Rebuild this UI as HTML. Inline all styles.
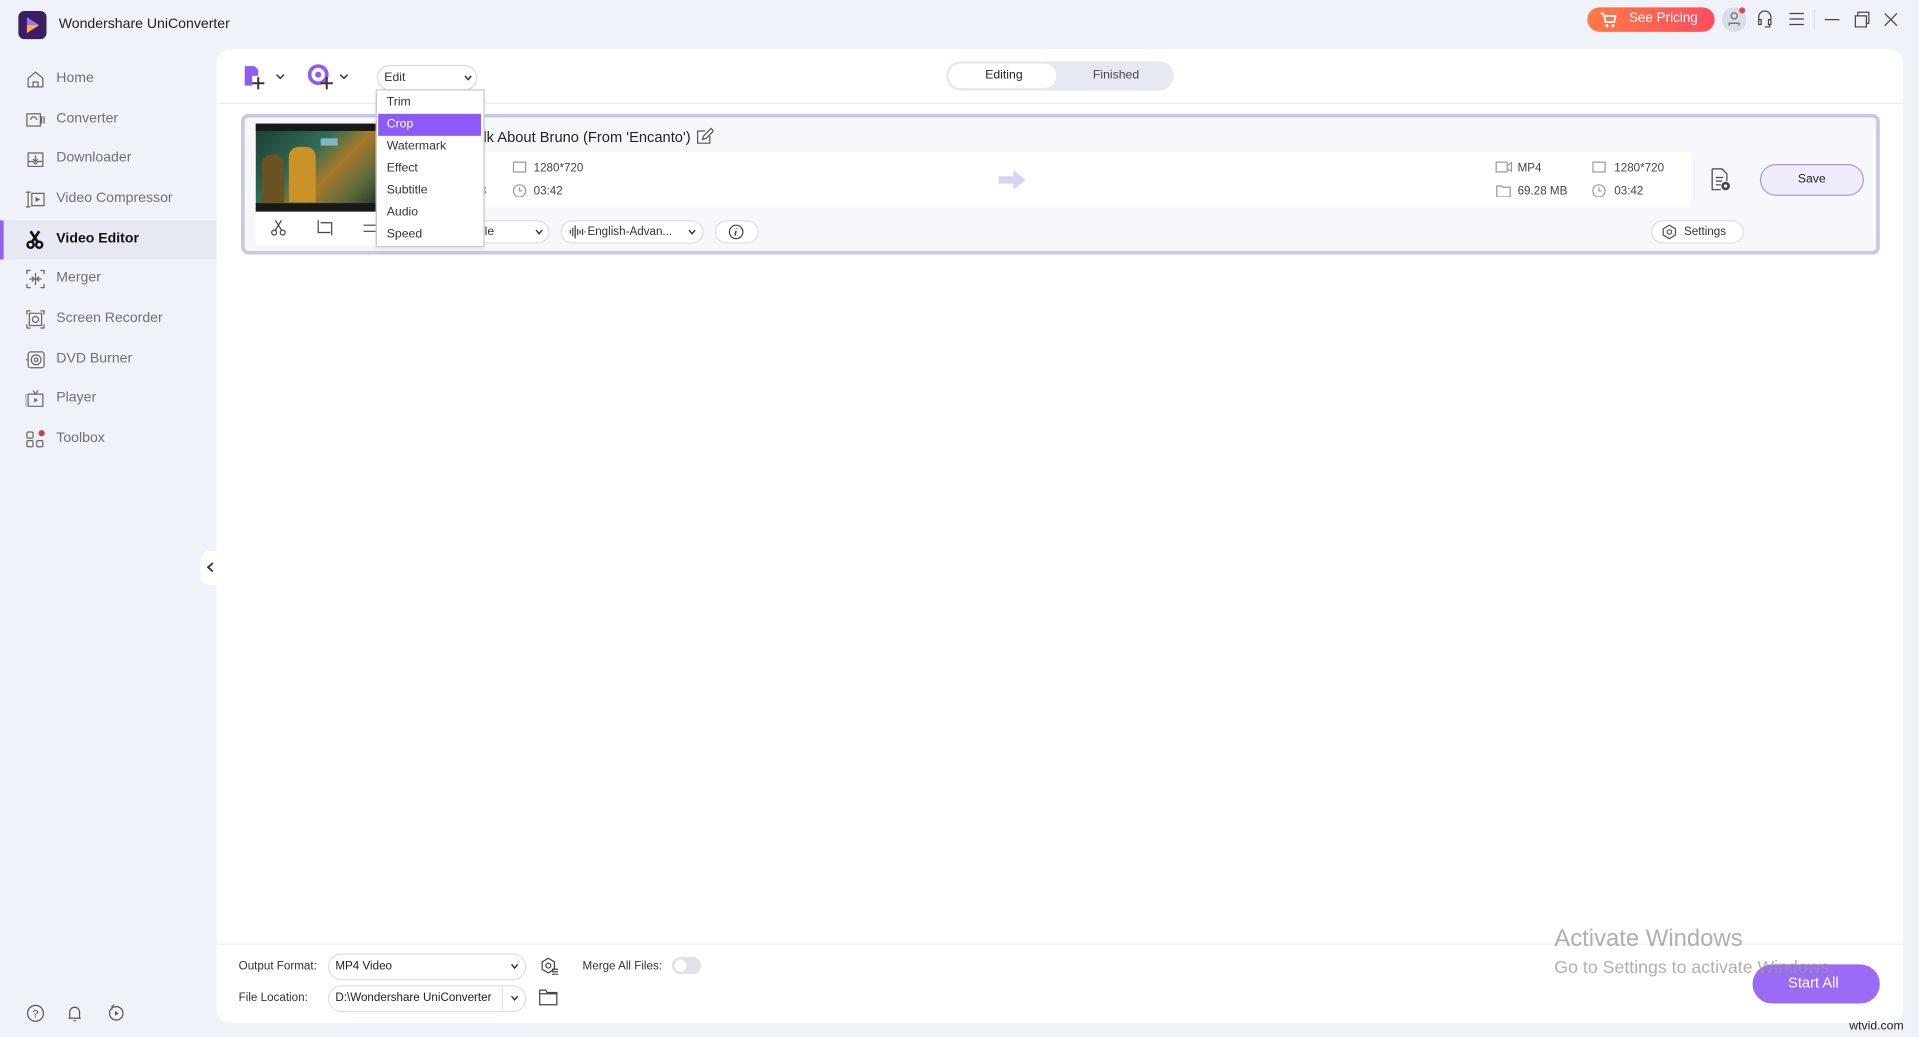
<!DOCTYPE html>
<html><head><meta charset="utf-8">
<style>
*{margin:0;padding:0;box-sizing:border-box}
html,body{width:1919px;height:1037px;overflow:hidden;background:#eff2f9;font-family:"Liberation Sans",sans-serif}
#w{position:absolute;left:0;top:0;width:1568px;height:847px;transform:scale(1.22385);transform-origin:0 0;background:#eff2f9}
.a{position:absolute}
.t{position:absolute;white-space:nowrap}
.nav{position:absolute;left:0;width:177px;height:32px;font-size:11.5px;color:#6f6f78}
.nav span{position:absolute;left:46px;top:9px}
.nav svg{position:absolute;left:21px;top:8px}
.mi{position:absolute;left:9px;font-size:10px;color:#333;width:84px;height:18px;line-height:18px;padding-left:7px}
.sm{font-size:10px;color:#333}
.pill{position:absolute;border:1px solid #dcdfe8;border-radius:12px;background:#fff}
</style></head><body><div id="w">
<!-- title bar -->
<div class="a" style="left:15px;top:9px;width:23px;height:23px;border-radius:5px;background:#3b1f63"></div>
<svg class="a" style="left:19px;top:12px" width="16" height="17"><path d="M3 2 L13 8.5 L3 15 Z" fill="#a66bff"/><path d="M3 8.5 L13 8.5 L3 15Z" fill="#ffb13b"/></svg>
<div class="t" style="left:48px;top:14px;font-size:11.5px;color:#222">Wondershare UniConverter</div>
<div class="a" style="left:1297px;top:6px;width:104px;height:20px;border-radius:10px;background:linear-gradient(90deg,#ff7a45,#ff4d5e)"></div>
<svg class="a" style="left:1307px;top:9px" width="14" height="14"><path d="M1 2h2l2 7h7l1-5H4" stroke="#fff" stroke-width="1.5" fill="none"/><circle cx="6" cy="12" r="1.2" fill="#fff"/><circle cx="11" cy="12" r="1.2" fill="#fff"/></svg>
<div class="t" style="left:1331px;top:9px;font-size:11px;color:#fff">See Pricing</div>
<div class="a" style="left:1407px;top:6px;width:20px;height:20px;border-radius:10px;background:#d9dde9"></div>
<div class="a" style="left:1421px;top:6px;width:5px;height:5px;border-radius:3px;background:#e5484d"></div>
<svg class="a" style="left:1411px;top:9px" width="12" height="13"><circle cx="6" cy="4" r="2.5" stroke="#666" fill="none"/><path d="M2 12v-2h8v2" stroke="#666" fill="none"/></svg>
<svg class="a" style="left:1434px;top:7px" width="16" height="18"><path d="M3 10V7a5 5 0 0110 0v3M3 9h2v4H3zM11 9h2v4h-2zM12 13v2H8" stroke="#444" fill="none"/></svg>
<svg class="a" style="left:1462px;top:10px" width="12" height="11"><path d="M0 1h12M0 5.5h12M0 10h12" stroke="#444"/></svg>
<div class="a" style="left:1482px;top:8px;width:1px;height:16px;background:#dde"></div>
<svg class="a" style="left:1491px;top:9px" width="60" height="14"><path d="M0 7h12" stroke="#444"/><path d="M25 4h9v9h-9zM27 4V1h9v9h-2" stroke="#444" fill="none"/><path d="M49 2l10 10M59 2L49 12" stroke="#444"/></svg>

<!-- sidebar -->
<div class="a" style="left:0;top:180px;width:177px;height:32px;background:#e6e9f2"></div>
<div class="a" style="left:0;top:180px;width:3px;height:32px;background:#8f63f0"></div>
<div class="nav" style="top:49px"><svg width="16" height="16"><path d="M2 7L8 2l6 5v7H2zM6 14v-4h4v4" stroke="#666" fill="none"/></svg><span>Home</span></div>
<div class="nav" style="top:82px"><svg width="16" height="16"><rect x="1" y="3" width="11" height="10" stroke="#666" fill="none"/><path d="M13 5v6M15 5v6M4 8a2.5 2.5 0 015 0" stroke="#666" fill="none"/></svg><span>Converter</span></div>
<div class="nav" style="top:114px"><svg width="16" height="16"><path d="M2 3h12v11H2zM2 10h4l2 2 2-2h4M8 5v5M6 8l2 2 2-2" stroke="#666" fill="none"/></svg><span>Downloader</span></div>
<div class="nav" style="top:147px"><svg width="16" height="16"><path d="M2 2v12M0 2h4M0 14h4M5 3h10v10H5z" stroke="#666" fill="none"/><path d="M8 6l4 2-4 2z" fill="#666"/></svg><span>Video Compressor</span></div>
<div class="nav" style="top:180px;color:#111;font-weight:bold"><svg width="16" height="16"><circle cx="4" cy="12" r="2.5" stroke="#111" stroke-width="2" fill="none"/><circle cx="11" cy="12" r="2.5" stroke="#111" stroke-width="2" fill="none"/><path d="M4 1l6 9M11 1L5 10" stroke="#111" stroke-width="2.2"/></svg><span>Video Editor</span></div>
<div class="nav" style="top:212px"><svg width="16" height="16"><path d="M1 4V1h3M12 1h3v3M15 12v3h-3M4 15H1v-3M3 8h4M5 6l2 2-2 2M13 8H9M11 6l-2 2 2 2M8 3v10" stroke="#666" fill="none"/></svg><span>Merger</span></div>
<div class="nav" style="top:245px"><svg width="16" height="16"><path d="M1 4V1h3M12 1h3v3M15 12v3h-3M4 15H1v-3M3 3h10v10H3z" stroke="#666" fill="none"/><circle cx="8" cy="8" r="2.5" stroke="#666" fill="none"/></svg><span>Screen Recorder</span></div>
<div class="nav" style="top:278px"><svg width="16" height="16"><rect x="2" y="1.5" width="13" height="13" rx="2" stroke="#666" fill="none"/><circle cx="8.5" cy="8" r="4" stroke="#666" fill="none"/><circle cx="8.5" cy="8" r="1.5" stroke="#666" fill="none"/><path d="M0 8h2" stroke="#666"/></svg><span>DVD Burner</span></div>
<div class="nav" style="top:310px"><svg width="16" height="16"><path d="M2 4h12v10H2zM0 4v10M6 1l2 3 2-3" stroke="#666" fill="none"/><path d="M7 7l3 2-3 2z" fill="#666"/></svg><span>Player</span></div>
<div class="nav" style="top:343px"><svg width="16" height="16"><rect x="1" y="2" width="5" height="5" rx="1" stroke="#666" fill="none"/><rect x="1" y="9" width="5" height="5" rx="1" stroke="#666" fill="none"/><rect x="9" y="9" width="5" height="5" rx="1" stroke="#666" fill="none"/><circle cx="13" cy="3" r="2.5" fill="#d03a45"/></svg><span>Toolbox</span></div>
<svg class="a" style="left:20px;top:819px" width="90" height="18"><circle cx="9" cy="9" r="6.5" stroke="#555" fill="none"/><text x="6.5" y="12.5" font-size="9" fill="#555" font-family="Liberation Sans">?</text><path d="M37 13V8a4 4 0 018 0v5zM36 13h10M40 15h2" stroke="#555" fill="none"/><circle cx="75" cy="9" r="5.5" stroke="#555" fill="none"/><path d="M74 7l3 2-3 2z" fill="#555"/><path d="M71 4l2-2" stroke="#555"/></svg>

<!-- collapse handle -->
<div class="a" style="left:164px;top:450px;width:13px;height:28px;background:#fff;border-radius:8px 0 0 8px"></div>
<svg class="a" style="left:169px;top:459px" width="6" height="9"><path d="M5 1L1 4.5 5 8" stroke="#333" stroke-width="1.5" fill="none"/></svg>

<!-- main panel -->
<div class="a" style="left:177px;top:40px;width:1378px;height:796px;background:#fff;border-radius:12px"></div>
<div class="a" style="left:177px;top:84px;width:1378px;height:1px;background:#eceef3"></div>
<div class="a" style="left:177px;top:771px;width:1378px;height:1px;background:#eceef3"></div>

<!-- toolbar -->
<svg class="a" style="left:199px;top:52px" width="36" height="22"><path d="M1 2h8l3 3v5H7v8H1z" fill="#8e5df5"/><path d="M12 11v10M7 16h10" stroke="#333" stroke-width="1.6"/><path d="M27 9l3 3 3-3" stroke="#333" stroke-width="1.2" fill="none"/></svg>
<svg class="a" style="left:251px;top:52px" width="36" height="22"><circle cx="9" cy="9" r="7" stroke="#8e5df5" stroke-width="3" fill="none"/><circle cx="9" cy="9" r="2.5" fill="#8e5df5"/><path d="M16 11v10M11 16h10" stroke="#333" stroke-width="1.6"/><path d="M27 9l3 3 3-3" stroke="#333" stroke-width="1.2" fill="none"/></svg>
<div class="pill" style="left:308px;top:53px;width:82px;height:21px;border-color:#d6d9e2"></div>
<div class="t sm" style="left:314px;top:58px">Edit</div>
<svg class="a" style="left:379px;top:61px" width="7" height="5"><path d="M1 1l2.5 3L6 1" stroke="#333" stroke-width="1.2" fill="none"/></svg>

<!-- tabs -->
<div class="a" style="left:773px;top:50px;width:186px;height:24px;border-radius:12px;background:#e6e9f1"></div>
<div class="a" style="left:775px;top:52px;width:88px;height:20px;border-radius:10px;background:#fff"></div>
<div class="t sm" style="left:805px;top:56px;color:#222">Editing</div>
<div class="t sm" style="left:893px;top:56px;color:#444">Finished</div>

<!-- card -->
<div class="a" style="left:197px;top:93px;width:1339px;height:115px;border:3px solid #c9c7e8;border-radius:6px;background:#f7f8fb"></div>
<div class="a" style="left:370px;top:124px;width:1012px;height:45px;background:#fff"></div>
<div class="a" style="left:209px;top:101px;width:98px;height:72px;background:linear-gradient(135deg,#1d3a33 0%,#2f6b55 40%,#a67a2a 60%,#5a6a3a 80%,#1c2c24 100%)"></div>
<div class="a" style="left:209px;top:101px;width:98px;height:6px;background:#181818"></div>
<div class="a" style="left:209px;top:166px;width:98px;height:7px;background:#181818"></div>
<div class="a" style="left:236px;top:120px;width:22px;height:45px;background:#c9932a;border-radius:8px 8px 0 0"></div>
<div class="a" style="left:214px;top:126px;width:18px;height:40px;background:#6b5222;border-radius:8px 8px 0 0"></div>
<div class="a" style="left:262px;top:113px;width:14px;height:6px;background:#7ab6c4"></div>
<div class="a" style="left:209px;top:173px;width:98px;height:27px;background:#fff"></div>
<svg class="a" style="left:220px;top:179px" width="90" height="14"><circle cx="4" cy="11" r="2" stroke="#444" fill="none"/><circle cx="11" cy="11" r="2" stroke="#444" fill="none"/><path d="M5 9L10 1M10 9L5 1" stroke="#444"/><path d="M40 1v10h10M42 3h9v10" stroke="#444" fill="none"/><path d="M77 5h12M77 10h12" stroke="#444"/></svg>
<div class="t" style="left:395px;top:105px;font-size:12px;color:#222">lk About Bruno (From 'Encanto')</div>
<svg class="a" style="left:569px;top:104px" width="14" height="14"><path d="M1 3h6M1 3v10h10V7M5 10l1-3 6-6 2 2-6 6z" stroke="#555" fill="none"/></svg>
<svg class="a" style="left:419px;top:131px" width="12" height="30"><rect x="0.5" y="1.5" width="10" height="8" stroke="#999" fill="none"/><circle cx="5.5" cy="25" r="5" stroke="#999" fill="none"/><path d="M5.5 22v3h2" stroke="#999" fill="none"/></svg>
<div class="t" style="left:436px;top:132px;font-size:9.5px;color:#444">1280*720</div>
<div class="t" style="left:436px;top:151px;font-size:9.5px;color:#444">03:42</div>
<div class="t" style="left:392px;top:151px;font-size:10px;color:#888">3</div>
<svg class="a" style="left:816px;top:138px" width="24" height="18"><path d="M0 6h12V1l10 8-10 8v-5H0z" fill="#d9d2f5"/></svg>
<svg class="a" style="left:1222px;top:131px" width="14" height="30"><rect x="0.5" y="1.5" width="9" height="8" stroke="#999" fill="none"/><path d="M10 4l3-2v7l-3-2" stroke="#999" fill="none"/><path d="M1 21h4l1 1h6v8H1z" stroke="#999" fill="none"/></svg>
<div class="t" style="left:1240px;top:132px;font-size:9.5px;color:#444">MP4</div>
<div class="t" style="left:1240px;top:151px;font-size:9.5px;color:#444">69.28 MB</div>
<svg class="a" style="left:1301px;top:131px" width="12" height="30"><rect x="0.5" y="1.5" width="10" height="8" stroke="#999" fill="none"/><circle cx="5.5" cy="25" r="5" stroke="#999" fill="none"/><path d="M5.5 22v3h2" stroke="#999" fill="none"/></svg>
<div class="t" style="left:1319px;top:132px;font-size:9.5px;color:#444">1280*720</div>
<div class="t" style="left:1319px;top:151px;font-size:9.5px;color:#444">03:42</div>
<div class="a" style="left:1384px;top:131px;width:1px;height:32px;background:#eee"></div>
<svg class="a" style="left:1396px;top:137px" width="20" height="22"><path d="M3 1h8l4 4v6M3 1v17h7M6 8h6M6 11h5M6 14h4" stroke="#444" fill="none"/><circle cx="14" cy="15" r="3.5" fill="#444"/><circle cx="14" cy="15" r="1.3" fill="#fff"/></svg>
<div class="a" style="left:1438px;top:134px;width:85px;height:26px;border:1px solid #a99ed6;border-radius:13px;background:#f1ecfc"></div>
<div class="t" style="left:1469px;top:141px;font-size:10px;color:#222">Save</div>
<div class="pill" style="left:1349px;top:180px;width:76px;height:19px"></div>
<svg class="a" style="left:1358px;top:183px" width="12" height="13"><path d="M6 1l5 3v5l-5 3-5-3V4z" stroke="#555" fill="none"/><circle cx="6" cy="6.5" r="1.8" stroke="#555" fill="none"/></svg>
<div class="t" style="left:1376px;top:184px;font-size:9.5px;color:#333">Settings</div>
<div class="pill" style="left:380px;top:180px;width:69px;height:19px"></div>
<div class="t" style="left:396px;top:184px;font-size:10px;color:#333">le</div>
<svg class="a" style="left:437px;top:187px" width="7" height="5"><path d="M1 1l2.5 3L6 1" stroke="#333" stroke-width="1.2" fill="none"/></svg>
<div class="pill" style="left:458px;top:180px;width:117px;height:19px"></div>
<svg class="a" style="left:465px;top:184px" width="14" height="11"><path d="M1 4v3M3 2v7M5 0v11M7 3v5M9 4v3M11 3v5M13 5v1" stroke="#444"/></svg>
<div class="t" style="left:480px;top:184px;font-size:9.5px;color:#333">English-Advan...</div>
<svg class="a" style="left:562px;top:187px" width="7" height="5"><path d="M1 1l2.5 3L6 1" stroke="#333" stroke-width="1.2" fill="none"/></svg>
<div class="pill" style="left:584px;top:180px;width:36px;height:19px"></div>
<svg class="a" style="left:595px;top:183px" width="13" height="13"><circle cx="6.5" cy="6.5" r="5.5" stroke="#444" fill="none"/><path d="M6.5 5.5l-1 4M6.7 3.5v.5" stroke="#444" stroke-width="1.2"/></svg>

<!-- dropdown menu -->
<div class="a" style="left:307px;top:73px;width:89px;height:129px;background:#fff;border:1px solid #c8c8c8;box-shadow:0 1px 3px rgba(0,0,0,.1)"></div>
<div class="mi" style="top:75px;left:309px">Trim</div>
<div class="mi" style="top:93px;left:309px;background:#8c5af7;color:#fff">Crop</div>
<div class="mi" style="top:111px;left:309px">Watermark</div>
<div class="mi" style="top:129px;left:309px">Effect</div>
<div class="mi" style="top:147px;left:309px">Subtitle</div>
<div class="mi" style="top:165px;left:309px">Audio</div>
<div class="mi" style="top:183px;left:309px">Speed</div>

<!-- bottom bar -->
<div class="t" style="left:195px;top:784px;font-size:9.5px;color:#333">Output Format:</div>
<div class="pill" style="left:268px;top:779px;width:162px;height:22px"></div>
<div class="t" style="left:274px;top:784px;font-size:9.5px;color:#222">MP4 Video</div>
<svg class="a" style="left:417px;top:787px" width="7" height="5"><path d="M1 1l2.5 3L6 1" stroke="#333" stroke-width="1.2" fill="none"/></svg>
<svg class="a" style="left:441px;top:782px" width="16" height="16"><path d="M7 1l5 3v6l-5 3-5-3V4z" stroke="#444" fill="none"/><circle cx="7" cy="7" r="2" stroke="#444" fill="none"/><path d="M10 10h5M10 12h5M10 14h5" stroke="#444"/></svg>
<div class="t" style="left:476px;top:784px;font-size:9.5px;color:#333">Merge All Files:</div>
<div class="a" style="left:549px;top:782px;width:24px;height:14px;border-radius:7px;background:#dfe2ea"></div>
<div class="a" style="left:551px;top:784px;width:10px;height:10px;border-radius:5px;background:#fff"></div>
<div class="t" style="left:195px;top:810px;font-size:9.5px;color:#333">File Location:</div>
<div class="pill" style="left:268px;top:805px;width:162px;height:22px"></div>
<div class="a" style="left:410px;top:806px;width:1px;height:20px;background:#e3e3e3"></div>
<div class="t" style="left:274px;top:810px;font-size:9.5px;color:#222">D:\Wondershare UniConverter</div>
<svg class="a" style="left:417px;top:813px" width="7" height="5"><path d="M1 1l2.5 3L6 1" stroke="#333" stroke-width="1.2" fill="none"/></svg>
<svg class="a" style="left:440px;top:808px" width="16" height="14"><path d="M1 1h5l1 2h8v10H1zM1 4h14" stroke="#444" fill="none"/></svg>
<div class="a" style="left:1432px;top:788px;width:104px;height:32px;border-radius:16px;background:#9a6cf6"></div>
<div class="t" style="left:1461px;top:796px;font-size:12px;color:#fff">Start All</div>
<div class="t" style="left:1270px;top:756px;font-size:19.5px;color:rgba(150,150,150,.75)">Activate Windows</div>
<div class="t" style="left:1270px;top:783px;font-size:14.5px;color:rgba(150,150,150,.75)">Go to Settings to activate Windows.</div>
<div class="t" style="left:1511px;top:833px;font-size:10px;color:#222">wtvid.com</div>
</div></body></html>
